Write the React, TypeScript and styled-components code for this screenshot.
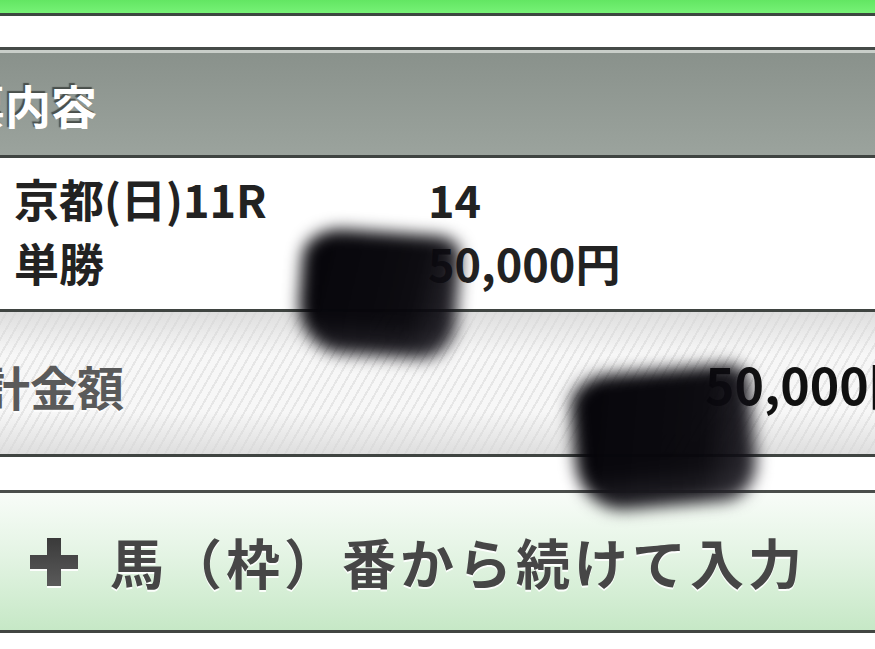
import React from "react";
import styled, { createGlobalStyle } from "styled-components";

const GlobalStyle = createGlobalStyle`
  html, body {
    margin: 0;
    padding: 0;
    background: #ffffff;
  }
  body {
    width: 875px;
    height: 649px;
    overflow: hidden;
    font-family: "Noto Sans CJK JP", "Noto Sans", sans-serif;
  }
`;

const Page = styled.div`
  position: relative;
  width: 875px;
  height: 649px;
  overflow: hidden;
  display: flex;
  flex-direction: column;
  background: #ffffff;
`;

const TopBar = styled.div`
  height: 13px;
  flex-shrink: 0;
  background: linear-gradient(#63e663, #76f276);
  border-bottom: 3px solid #3c4740;
`;

const Gap = styled.div<{ $h: number }>`
  height: ${(p) => p.$h}px;
  flex-shrink: 0;
  background: #ffffff;
`;

const SectionHeader = styled.div`
  height: 102px;
  flex-shrink: 0;
  display: flex;
  align-items: center;
  border-top: 3px solid #454a47;
  border-bottom: 3px solid #3f4441;
  box-shadow: inset 0 3px 0 #c9cec9;
  padding-top: 3px;
  background: linear-gradient(#89918b, #9ba39d);
`;

const HeaderTitle = styled.div`
  margin-left: -87px;
  font-size: 46px;
  font-weight: 700;
  color: #ffffff;
  text-shadow: -2px -2px 1px rgba(60, 66, 62, 0.85);
`;

const DetailRow = styled.div`
  height: 154px;
  flex-shrink: 0;
  box-sizing: border-box;
  padding: 8px 0 0 14px;
  border-bottom: 3px solid #3f4441;
  display: grid;
  grid-template-columns: 414px 1fr;
  grid-auto-rows: 64px;
  align-items: center;
  background: #ffffff;
`;

const Cell = styled.div`
  font-size: 45px;
  font-weight: 700;
  color: #222222;
  line-height: 1;
  white-space: nowrap;
`;

const TotalRow = styled.div`
  height: 142px;
  flex-shrink: 0;
  border-bottom: 3px solid #3f4441;
  display: grid;
  grid-template-columns: 769px auto;
  align-items: center;
  margin-left: -64px;
  background:
    linear-gradient(
      rgba(214, 214, 214, 0.75) 0%,
      rgba(255, 255, 255, 0) 30%,
      rgba(255, 255, 255, 0) 70%,
      rgba(214, 214, 214, 0.75) 100%
    ),
    repeating-linear-gradient(
      -60deg,
      #f7f7f7 0px,
      #f7f7f7 6px,
      #e6e6e6 6px,
      #e6e6e6 8px
    );
`;

const TotalLabel = styled.div`
  font-size: 47px;
  font-weight: 700;
  color: #5a5a5a;
  text-shadow: 0 2px 0 rgba(255, 255, 255, 0.8);
  white-space: nowrap;
  padding-top: 4px;
`;

const TotalValue = styled.div`
  font-size: 50px;
  font-weight: 700;
  color: #111111;
  white-space: nowrap;
`;

const ActionButton = styled.div`
  height: 137px;
  flex-shrink: 0;
  border-top: 3px solid #4a4e4b;
  border-bottom: 3px solid #424642;
  display: flex;
  align-items: center;
  gap: 30px;
  padding-left: 28px;
  background: linear-gradient(#f8fcf8 0%, #e4f4e4 45%, #c6e8c6 100%);
`;

const PlusIcon = styled.svg`
  width: 52px;
  height: 52px;
  flex-shrink: 0;
  filter: drop-shadow(0 2px 0 rgba(255, 255, 255, 0.9));
`;

const ActionLabel = styled.div`
  font-size: 54px;
  font-weight: 700;
  color: #464646;
  letter-spacing: 4px;
  white-space: nowrap;
  text-shadow: 0 2px 0 rgba(255, 255, 255, 0.9);
`;

/* Blurred ink blots lying over the rows */
const Smudge = styled.div<{ $x: number; $y: number; $w: number; $h: number; $r: number }>`
  position: absolute;
  left: ${(p) => p.$x}px;
  top: ${(p) => p.$y}px;
  width: ${(p) => p.$w}px;
  height: ${(p) => p.$h}px;
  transform: rotate(${(p) => p.$r}deg);
  border-radius: 40px 22px 34px 46px / 30px 20px 40px 50px;
  background:
    linear-gradient(
      rgba(255, 255, 255, 0) 0%,
      rgba(255, 255, 255, 0) 72%,
      rgba(90, 88, 96, 0.35) 100%
    ),
    linear-gradient(
      100deg,
      rgba(6, 5, 10, 1) 0%,
      rgba(8, 7, 12, 0.98) 70%,
      rgba(20, 18, 26, 0.88) 100%
    );
  filter: blur(8px);
  pointer-events: none;
`;

export default function App() {
  return (
    <>
      <GlobalStyle />
      <Page>
        <TopBar />
        <Gap $h={31} />
        <SectionHeader>
          <HeaderTitle>投票内容</HeaderTitle>
        </SectionHeader>
        <DetailRow>
          <Cell>京都(日)11R</Cell>
          <Cell>14</Cell>
          <Cell>単勝</Cell>
          <Cell>50,000円</Cell>
        </DetailRow>
        <TotalRow>
          <TotalLabel>合計金額</TotalLabel>
          <TotalValue>50,000円</TotalValue>
        </TotalRow>
        <Gap $h={33} />
        <ActionButton>
          <PlusIcon viewBox="0 0 52 52">
            <defs>
              <linearGradient id="plusFill" x1="0" y1="0" x2="0" y2="1">
                <stop offset="0" stopColor="#3a3a3a" />
                <stop offset="1" stopColor="#5a5a5a" />
              </linearGradient>
            </defs>
            <path
              d="M19 2 H33 V19 H50 V33 H33 V50 H19 V33 H2 V19 H19 Z"
              fill="url(#plusFill)"
            />
          </PlusIcon>
          <ActionLabel>馬（枠）番から続けて入力</ActionLabel>
        </ActionButton>
        <Smudge $x={300} $y={232} $w={158} $h={124} $r={4} />
        <Smudge $x={574} $y={370} $w={180} $h={136} $r={-5} />
      </Page>
    </>
  );
}
